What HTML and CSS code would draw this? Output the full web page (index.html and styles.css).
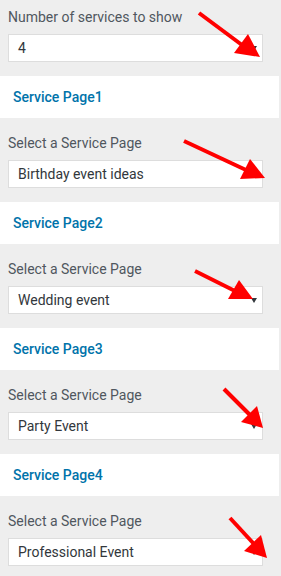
FILE: index.html
```html
<!DOCTYPE html>
<html lang="en">
<head>
  <meta charset="UTF-8" />
  <title>Service Pages</title>
  <link rel="stylesheet" href="styles.css">
</head>
<body>

<div class="controls">
  <div class="field first">
    <label>Number of services to show</label>
    <div class="select"><span>4</span></div>
  </div>
  <div class="panel">Service Page1</div>

  <div class="field">
    <label>Select a Service Page</label>
    <div class="select"><span>Birthday event ideas</span></div>
  </div>
  <div class="panel">Service Page2</div>

  <div class="field">
    <label>Select a Service Page</label>
    <div class="select"><span>Wedding event</span></div>
  </div>
  <div class="panel">Service Page3</div>

  <div class="field">
    <label>Select a Service Page</label>
    <div class="select"><span>Party Event</span></div>
  </div>
  <div class="panel">Service Page4</div>

  <div class="field">
    <label>Select a Service Page</label>
    <div class="select"><span>Professional Event</span></div>
  </div>
</div>

<!-- annotation arrows drawn over the screenshot -->
<svg class="arrows" width="281" height="576" viewBox="0 0 281 576">
  <g stroke="#ff0000" stroke-width="4" fill="#ff0000">
    <line x1="199" y1="13" x2="242" y2="45" />
    <polygon points="260,57 234,53 248,34" stroke="none" />

    <line x1="184" y1="141" x2="246" y2="170" />
    <polygon points="265,178 240,179 250,159" stroke="none" />

    <line x1="195" y1="271" x2="235" y2="291" />
    <polygon points="253,299 228,299 239,280" stroke="none" />

    <line x1="224" y1="389" x2="250" y2="415" />
    <polygon points="263,428 241,422 257,406" stroke="none" />

    <line x1="230" y1="518" x2="254" y2="544" />
    <polygon points="267,558 244,551 261,535" stroke="none" />
  </g>
</svg>

</body>
</html>
```

FILE: styles.css
```css
html, body {
  margin: 0;
  padding: 0;
}

body {
  position: relative;
  width: 281px;
  height: 576px;
  overflow: hidden;
  background: #eeeeee;
  font-family: Roboto, "Liberation Sans", sans-serif;
  font-size: 14px;
}

.controls {
  width: 279px;
}

.field {
  display: flex;
  flex-direction: column;
  gap: 7px;
  padding: 15px 8px 14px 8px;
  width: 255px;
}

.field.first {
  padding-top: 7px;
}

.field label {
  display: block;
  line-height: 20px;
  color: #50575e;
}

.select {
  position: relative;
  height: 26px;
  border: 1px solid #dddddd;
  background: #fff;
  color: #32373c;
  line-height: 26px;
  padding-left: 9px;
}

.select::after {
  content: "";
  position: absolute;
  right: 5px;
  top: 11px;
  border-left: 3px solid transparent;
  border-right: 3px solid transparent;
  border-top: 5px solid #32373c;
}

.panel {
  height: 42px;
  line-height: 42px;
  padding-left: 13px;
  background: #fff;
  color: #0073aa;
  font-weight: 500;
}

.arrows {
  position: absolute;
  left: 0;
  top: 0;
  pointer-events: none;
}
```
